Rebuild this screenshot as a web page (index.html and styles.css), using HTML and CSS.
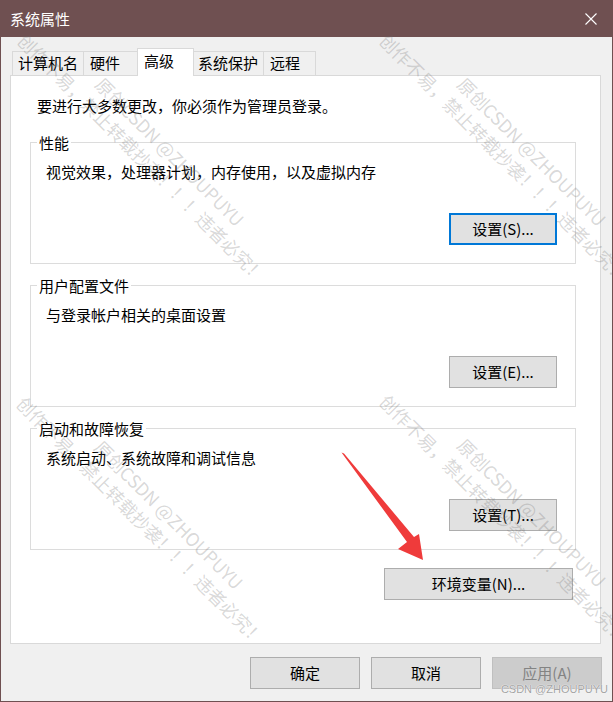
FILE: index.html
```html
<!DOCTYPE html>
<html lang="zh-CN">
<head>
<meta charset="utf-8">
<title>系统属性</title>
<link rel="stylesheet" href="styles.css">
</head>
<body>
<div class="window">
  <header class="titlebar">
    <span class="title">系统属性</span>
    <svg class="close" width="12" height="12" viewBox="0 0 12 12"><path d="M0.5 0.5 L11.5 11.5 M11.5 0.5 L0.5 11.5" stroke="#ffffff" stroke-width="1.1" fill="none"/></svg>
  </header>
  <main class="client">
    <nav class="tabs">
      <div class="tab t1">计算机名</div>
      <div class="tab t2">硬件</div>
      <div class="tab t3 selected">高级</div>
      <div class="tab t4">系统保护</div>
      <div class="tab t5">远程</div>
    </nav>
    <section class="panel">
      <p class="note">要进行大多数更改，你必须作为管理员登录。</p>
      <fieldset class="group first">
        <legend>性能</legend>
        <p class="desc">视觉效果，处理器计划，内存使用，以及虚拟内存</p>
        <button class="btn btn-group focused">设置(S)...</button>
      </fieldset>
      <fieldset class="group">
        <legend>用户配置文件</legend>
        <p class="desc">与登录帐户相关的桌面设置</p>
        <button class="btn btn-group">设置(E)...</button>
      </fieldset>
      <fieldset class="group">
        <legend>启动和故障恢复</legend>
        <p class="desc">系统启动、系统故障和调试信息</p>
        <button class="btn btn-group">设置(T)...</button>
      </fieldset>
      <button class="btn btn-env">环境变量(N)...</button>
    </section>
    <footer class="footer">
      <button class="btn btn-foot">确定</button>
      <button class="btn btn-foot">取消</button>
      <button class="btn btn-foot disabled">应用(A)</button>
    </footer>
  </main>
  <svg class="arrow" width="613" height="702" viewBox="0 0 613 702">
    <polygon points="340.5,452.5 343,453.5 413,537 418,534 422,560 397,549 406,542" fill="#ef3b3b"/>
  </svg>
  <div class="wm wm-a"><span class="wm-line1">原创CSDN @ZHOUPUYU</span><span class="wm-line2">创作不易，禁止转载抄袭！！！违者必究！</span></div>
  <div class="wm wm-b"><span class="wm-line1">原创CSDN @ZHOUPUYU</span><span class="wm-line2">创作不易，禁止转载抄袭！！！违者必究！</span></div>
  <div class="wm wm-c"><span class="wm-line1">原创CSDN @ZHOUPUYU</span><span class="wm-line2">创作不易，禁止转载抄袭！！！违者必究！</span></div>
  <div class="wm wm-d"><span class="wm-line1">原创CSDN @ZHOUPUYU</span><span class="wm-line2">创作不易，禁止转载抄袭！！！违者必究！</span></div>
  <div class="csdn">CSDN @ZHOUPUYU</div>
</div>
</body>
</html>
```
FILE: styles.css
```css
html, body {
  margin: 0;
  padding: 0;
  width: 613px;
  height: 702px;
  overflow: hidden;
  background: #f0f0f0;
}

.window {
  position: relative;
  box-sizing: border-box;
  width: 613px;
  height: 702px;
  border: 1px solid #6f5051;
  border-top: 0;
  background: #f0f0f0;
  overflow: hidden;
  font-family: "Noto Sans CJK SC", sans-serif;
  font-size: 15px;
  color: #000;
  display: flex;
  flex-direction: column;
}

.titlebar {
  height: 37px;
  flex: none;
  background: #6f5051;
  display: flex;
  align-items: center;
  padding-left: 9px;
}

.title {
  color: #ffffff;
  font-size: 15px;
  line-height: 20px;
}

.close {
  margin-left: auto;
  margin-right: 15px;
  display: block;
}

.client {
  flex: 1;
  padding: 11px 10px 0 9px;
  background: #f0f0f0;
}

.tabs {
  display: flex;
  align-items: flex-end;
  height: 28px;
  margin-left: 2px;
  margin-bottom: -1px;
}

.tab {
  box-sizing: border-box;
  height: 24px;
  margin-bottom: 1px;
  border: 1px solid #d9d9d9;
  border-bottom: 0;
  background: #f0f0f0;
  line-height: 21px;
  padding-left: 5px;
  white-space: nowrap;
}

.tab + .tab {
  margin-left: -1px;
}

.t1 { width: 72px; }
.t2 { width: 55px; padding-left: 6px; }
.t3 { width: 57px; padding-left: 6px; }
.t4 { width: 71px; padding-left: 4px; }
.t5 { width: 53px; padding-left: 6px; }

.tab.selected {
  height: 28px;
  margin-bottom: 0;
  background: #ffffff;
  line-height: 24px;
  position: relative;
  z-index: 1;
}

.panel {
  box-sizing: border-box;
  margin-right: 1px;
  border: 1px solid #d9d9d9;
  background: #ffffff;
  padding: 20px 0 43px 0;
}

.note {
  margin: 0 0 0 26px;
  line-height: 20px;
}

.group {
  margin: 11px 24px 0 19px;
  padding: 9px 18px 18px 6px;
  border: 1px solid #dcdcdc;
  min-width: 0;
}

.group.first {
  margin-top: 16px;
}

.group legend {
  padding: 0 2px;
  line-height: 21px;
  font-size: 15px;
}

.desc {
  margin: 0 0 0 9px;
  line-height: 20px;
}

.btn {
  box-sizing: border-box;
  display: block;
  height: 32px;
  padding: 0;
  border: 1px solid #adadad;
  background: #e1e1e1;
  font-family: "Noto Sans CJK SC", sans-serif;
  font-size: 15px;
  line-height: 20px;
  color: #000;
  white-space: nowrap;
}

.btn-group {
  width: 108px;
  margin: 31px 0 0 auto;
}

.btn.focused {
  border: 2px solid #0078d7;
}

.btn-env {
  width: 189px;
  margin: 18px 27px 0 auto;
}

.footer {
  display: flex;
  justify-content: flex-end;
  gap: 11px;
  padding-top: 13px;
}

.btn-foot {
  width: 110px;
}

.btn.disabled {
  background: #cccccc;
  border-color: #bfbfbf;
  color: #838383;
}

.arrow {
  position: absolute;
  left: 0;
  top: 0;
  pointer-events: none;
}

.wm {
  position: absolute;
  left: 0;
  top: 0;
  transform-origin: 0 0;
  font-family: "Noto Sans CJK SC", sans-serif;
  font-size: 18px;
  line-height: 24px;
  color: rgba(110, 110, 110, 0.27);
  white-space: nowrap;
  pointer-events: none;
}

.wm-line1,
.wm-line2 {
  display: block;
}

.wm-line1 {
  padding-left: 86px;
}

.wm-a { transform: translate(46px, 11px) rotate(45deg); }
.wm-b { transform: translate(408px, 11px) rotate(45deg); }
.wm-c { transform: translate(45px, 374px) rotate(45deg); }
.wm-d { transform: translate(408px, 372px) rotate(45deg); }

.csdn {
  position: absolute;
  right: 4px;
  top: 682px;
  font-family: "Liberation Sans", sans-serif;
  font-size: 11px;
  line-height: 14px;
  color: #a3a3a3;
  text-shadow: 0 0 1px #ffffff, 0 0 1px #ffffff;
  pointer-events: none;
}
```
